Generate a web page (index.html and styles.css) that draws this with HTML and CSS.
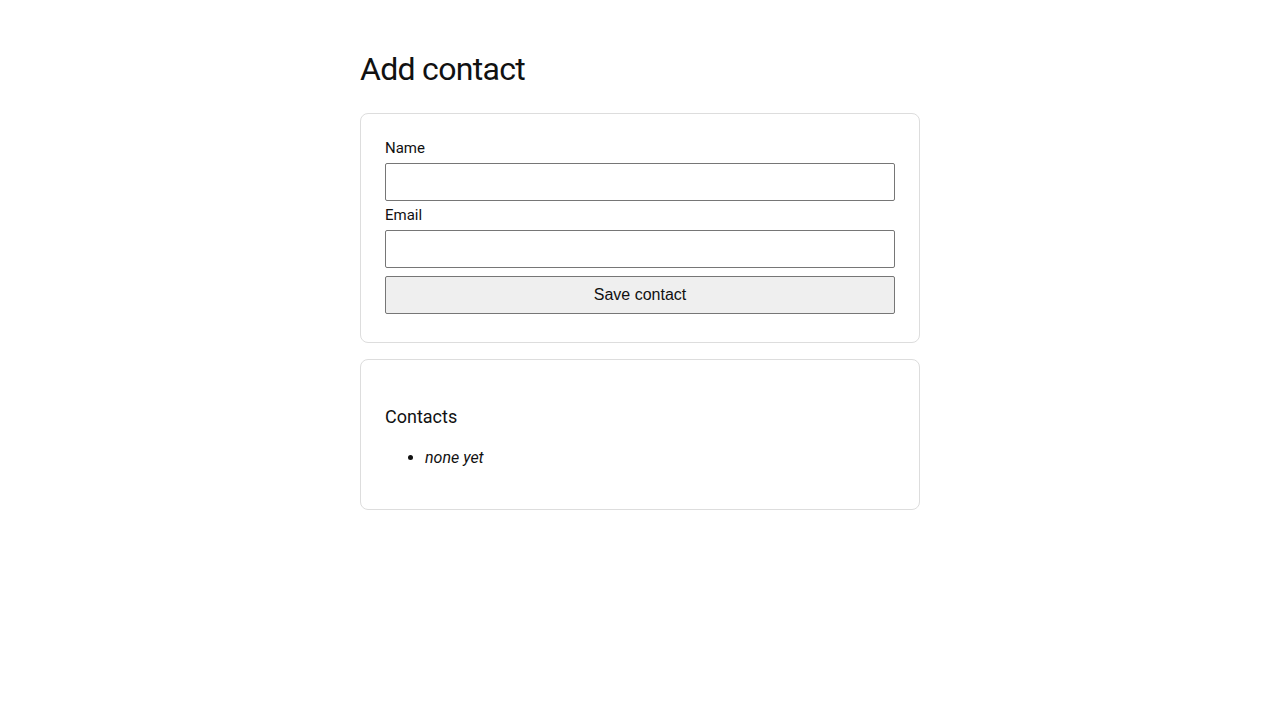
FILE: index.html
```html
<!DOCTYPE html>
<html lang="en">
<head>
<meta charset="utf-8">
<title>Add contact</title>
<link rel="stylesheet" href="styles.css">
</head>
<body>
<main class="page">
  <h1 class="page-title">Add contact</h1>
  <section class="card">
    <form class="contact-form">
      <label class="field-label" for="name">Name</label>
      <input class="field-input" id="name" type="text">
      <label class="field-label field-label--next" for="email">Email</label>
      <input class="field-input" id="email" type="email">
      <button class="save-btn" type="button">Save contact</button>
    </form>
  </section>
  <section class="card">
    <h2 class="card-title">Contacts</h2>
    <ul class="contact-list">
      <li><em>none yet</em></li>
    </ul>
  </section>
</main>
</body>
</html>
```
FILE: styles.css
```css
html, body {
  margin: 0;
  padding: 0;
  background: #fff;
}
body {
  font-family: Roboto, "Liberation Sans", sans-serif;
  color: #111;
}
.page {
  width: 560px;
  margin: 0 auto;
  padding-top: 50px;
  display: flex;
  flex-direction: column;
  gap: 16px;
}
.page-title {
  font-size: 32px;
  font-weight: 400;
  line-height: 38px;
  letter-spacing: -0.7px;
  margin: 0 0 9px;
}
.card {
  border: 1px solid #ddd;
  border-radius: 8px;
  padding: 24px;
}
.contact-form {
  display: flex;
  flex-direction: column;
}
.field-label {
  display: block;
  font-size: 15px;
  line-height: 19px;
  margin: 1px 0 5px;
}
.field-label--next {
  margin-top: 5px;
}
.field-input {
  box-sizing: border-box;
  width: 100%;
  height: 38px;
  margin: 0;
  padding: 8px;
  border: 1px solid #767676;
  border-radius: 2px;
  font-family: "Liberation Sans", sans-serif;
  font-size: 16px;
  background: #fff;
}
.save-btn {
  box-sizing: border-box;
  width: 100%;
  height: 38px;
  margin: 8px 0 4px;
  border: 1px solid #767676;
  border-radius: 2px;
  background: #efefef;
  color: #111;
  font-family: "Liberation Sans", Arial, sans-serif;
  font-size: 16px;
}
.card-title {
  font-size: 18px;
  font-weight: 400;
  line-height: 21px;
  margin: 22px 0 21px;
}
.contact-list {
  margin: 0 0 18px;
  padding-left: 40px;
  font-size: 16px;
  line-height: 19px;
}
```
